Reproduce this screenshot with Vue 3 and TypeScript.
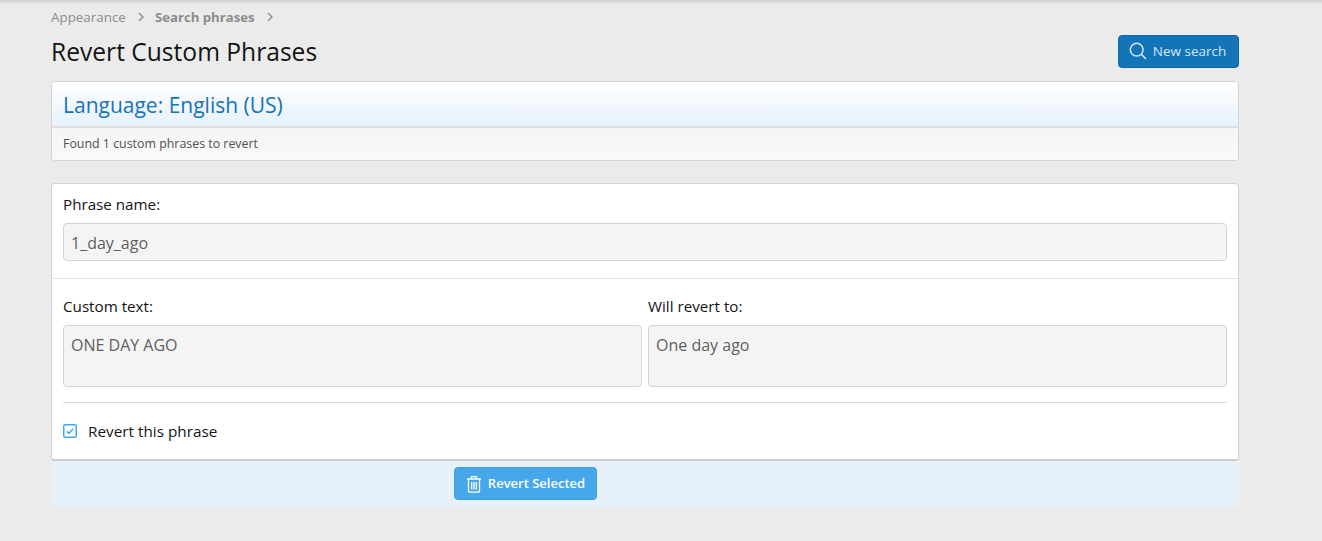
<script setup lang="ts">
const crumbs: { label: string; strong: boolean }[] = [
  { label: 'Appearance', strong: false },
  { label: 'Search phrases', strong: true },
]
</script>

<template>
  <div class="page">
    <div class="topshadow"></div>
    <main class="content">
      <nav class="crumbs">
        <template v-for="c in crumbs" :key="c.label">
          <span :class="{ strong: c.strong }">{{ c.label }}</span>
          <svg class="chev" width="8" height="10" viewBox="0 0 8 10"><path d="M2 1l4 4-4 4" fill="none" stroke="#8c8c8c" stroke-width="1.3" /></svg>
        </template>
      </nav>
      <header class="head">
        <h1>Revert Custom Phrases</h1>
        <button class="btn primary" type="button">
          <svg width="18" height="18" viewBox="0 0 18 18" fill="none" stroke="#d3e8f6" stroke-width="1.5"><circle cx="7.7" cy="7.7" r="6.4" /><path d="M12.4 12.4L17 17" /></svg>
          New search
        </button>
      </header>

      <section class="block summary">
        <h2>Language: English (US)</h2>
        <p>Found 1 custom phrases to revert</p>
      </section>

      <form class="block-wrap" @submit.prevent>
        <section class="block main">
          <div class="row one">
            <label>Phrase name:</label>
            <div class="field">1_day_ago</div>
          </div>
          <div class="row two">
            <div class="col">
              <label>Custom text:</label>
              <div class="field area">ONE DAY AGO</div>
            </div>
            <div class="col">
              <label>Will revert to:</label>
              <div class="field area">One day ago</div>
            </div>
          </div>
          <div class="check">
            <span class="box">
              <svg width="14" height="14" viewBox="0 0 14 14"><rect x="0.75" y="0.75" width="12.5" height="12.5" rx="1.5" fill="#fff" stroke="#47a7eb" stroke-width="1.5" /><path d="M3.8 7.2l2.2 2.2 4.2-4.6" fill="none" stroke="#47a7eb" stroke-width="1.6" /></svg>
            </span>
            <span>Revert this phrase</span>
          </div>
        </section>
        <footer class="submit">
          <button class="btn accent" type="submit">
            <svg width="16" height="18" viewBox="0 0 16 18" fill="none" stroke="#fff" stroke-width="1.3"><path d="M1 4h14M5.5 4V1.6h5V4M2.5 4v12a1.2 1.2 0 0 0 1.2 1.2h8.6a1.2 1.2 0 0 0 1.2-1.2V4M5.7 7v7.5M8 7v7.5M10.3 7v7.5" /></svg>
            <span class="accent-text">Revert Selected</span>
          </button>
        </footer>
      </form>
    </main>
  </div>
</template>

<style>
html, body { margin: 0; background: #ebebeb; }
</style>

<style scoped>
.page {
  width: 1322px;
  height: 541px;
  overflow: hidden;
  background: #ebebeb;
  font-family: "Open Sans", "Noto Sans", sans-serif;
  color: #141414;
}
.topshadow {
  height: 4px;
  background: linear-gradient(#cccccc, #ebebeb);
}
.content {
  width: 1188px;
  margin-left: 51px;
}
.crumbs {
  display: flex;
  align-items: center;
  height: 26px;
  font-size: 13.4px;
  color: #8c8c8c;
}
.crumbs .strong { font-weight: 700; font-size: 13.2px; }
.chev { margin: 0 10px 0 11px; }
.head {
  display: flex;
  justify-content: space-between;
  align-items: center;
  height: 37px;
  margin-top: 4px;
}
h1 {
  margin: 0;
  font-size: 24.6px;
  font-weight: 400;
  line-height: 34px;
  padding-bottom: 2px;
}
.btn {
  display: inline-flex;
  align-items: center;
  justify-content: center;
  gap: 6px;
  border-radius: 4px;
  font: inherit;
  font-size: 13.5px;
  padding: 0;
}
.primary {
  width: 121px;
  height: 33px;
  margin-top: -3px;
  color: #d3e8f6;
  background: #1474b8;
  border: 1px solid #12699f;
  padding-right: 2px;
}
.block {
  background: #fff;
  border: 1px solid #d4d4d4;
  border-radius: 4px;
  box-sizing: border-box;
}
.summary {
  margin-top: 10px;
  height: 80px;
  overflow: hidden;
}
h2 {
  margin: 0;
  box-sizing: border-box;
  height: 46px;
  padding-left: 11px;
  font-size: 21px;
  font-weight: 400;
  line-height: 46px;
  color: #1474b8;
  background: linear-gradient(#fff, #e6f1fb);
  border-bottom: 2px solid #dfdfdf;
}
.summary p {
  margin: 0;
  height: 32px;
  padding-left: 11px;
  font-size: 12.4px;
  line-height: 32px;
  color: #505050;
  background: linear-gradient(#f5f5f5, #f9f9f9);
}
.block-wrap { margin-top: 22px; }
.main {
  height: 278px;
  border-bottom: 2px solid #cccccc;
}
label {
  display: block;
  font-size: 15.2px;
  line-height: 20px;
}
.row { padding: 0 11px; }
.one {
  height: 95px;
  box-sizing: border-box;
  padding-top: 10px;
  border-bottom: 1px solid #e2e2e2;
}
.field {
  box-sizing: border-box;
  height: 38px;
  margin-top: 9px;
  padding: 0 7px;
  font-size: 16px;
  line-height: 38px;
  color: #5f5f5f;
  background: #f4f4f4;
  border: 1px solid #d4d4d4;
  border-radius: 4px;
}
.two {
  display: grid;
  grid-template-columns: 1fr 1fr;
  gap: 6px;
  padding-top: 17px;
}
.area {
  height: 62px;
  margin-top: 9px;
  line-height: 20px;
  padding-top: 9px;
}
.check {
  display: flex;
  align-items: center;
  gap: 11px;
  height: 55px;
  margin: 15px 11px 0;
  border-top: 1px solid #d9d9d9;
  font-size: 15.3px;
}
.box { display: flex; }
.submit {
  height: 45px;
  background: #e6f1fa;
  display: flex;
  align-items: center;
  padding-left: 403px;
}
.accent {
  width: 143px;
  height: 33px;
  color: #fff;
  background: #47a7eb;
  border: 1px solid #3f9fe0;
  font-weight: 600;
  font-size: 13px;
}
.accent-text { position: relative; top: -1px; }
</style>
